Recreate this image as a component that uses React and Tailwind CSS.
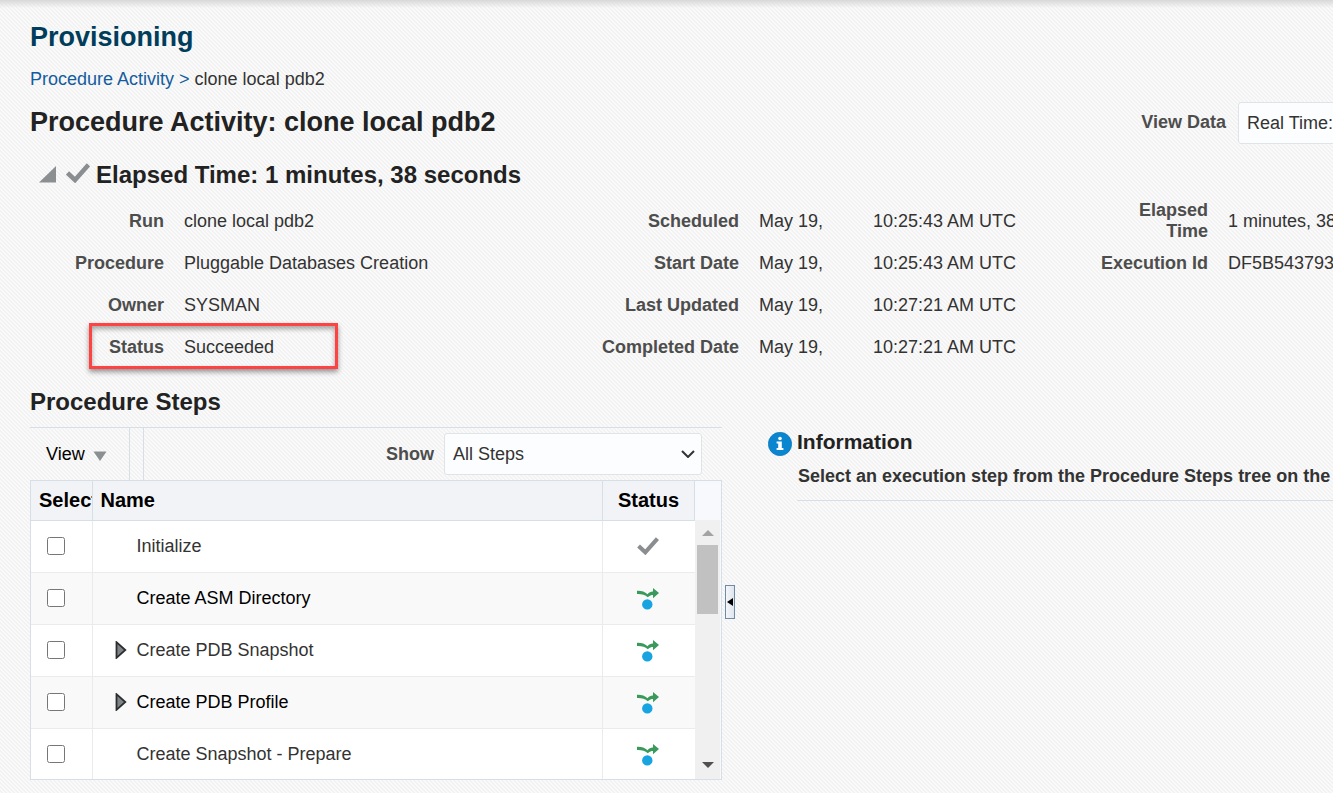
import React from "react";

const stripes =
  "bg-[#f6f6f6] bg-[linear-gradient(45deg,#f2f2f2_25%,#fafafa_25%,#fafafa_50%,#f2f2f2_50%,#f2f2f2_75%,#fafafa_75%)] bg-[size:4px_4px]";

function CheckMark({ className }) {
  return (
    <svg viewBox="0 0 24 20" className={className} aria-hidden="true">
      <path d="M1.5 10 L9 17 L22.5 1.8" fill="none" stroke="#8b8e91" strokeWidth="4.6" />
    </svg>
  );
}

function SkippedIcon() {
  return (
    <svg viewBox="0 -2 22 24" className="mx-auto h-6 w-[22px]" aria-label="Skipped" role="img">
      <path
        d="M0 2.8 C4 2.6 8 3.6 10.5 6.2 C12 4 14 3.3 16 3.4 V0 L22 5 L16 10.2 V7 C14.5 7 12.5 7.6 10.8 9.2 C8 6.8 4.5 5.8 0 6 Z"
        fill="#3a9a5b"
      />
      <circle cx="10.3" cy="16.4" r="5.2" fill="#18a4e0" />
    </svg>
  );
}

function Expander() {
  return (
    <svg viewBox="0 0 12 18" className="h-[18px] w-3" aria-hidden="true">
      <path d="M1.5 1.2 V16.8 L10.3 9 Z" fill="#808487" stroke="#2b2d2f" strokeWidth="1.8" />
    </svg>
  );
}

function Label({ children, className = "" }) {
  return <dt className={`text-right font-bold text-[#4d4d4d] ${className}`}>{children}</dt>;
}

const general = [
  ["Run", "clone local pdb2"],
  ["Procedure", "Pluggable Databases Creation"],
  ["Owner", "SYSMAN"],
  ["Status", "Succeeded"],
];

const dates = [
  ["Scheduled", "May 19,", "10:25:43 AM UTC"],
  ["Start Date", "May 19,", "10:25:43 AM UTC"],
  ["Last Updated", "May 19,", "10:27:21 AM UTC"],
  ["Completed Date", "May 19,", "10:27:21 AM UTC"],
];

const execution = [
  ["Elapsed Time", "1 minutes, 38"],
  ["Execution Id", "DF5B543793"],
];

const steps = [
  { name: "Initialize", done: true },
  { name: "Create ASM Directory" },
  { name: "Create PDB Snapshot", children: true },
  { name: "Create PDB Profile", children: true },
  { name: "Create Snapshot - Prepare" },
];

function Summary() {
  return (
    <section className="grid grid-cols-[minmax(0,570fr)_minmax(0,500fr)_minmax(0,233fr)] whitespace-nowrap">
      <dl>
        {general.map(([label, value]) => (
          <div key={label} className="relative flex h-[42px] items-center gap-5">
            <Label className="w-[134px]">{label}</Label>
            <dd>{value}</dd>
            {label === "Status" && (
              <span className="pointer-events-none absolute -top-[3px] left-[59px] h-[46px] w-[249px] border-3 border-[#ff4343] shadow-[0_3px_5px_#00000066,inset_0_3px_5px_#00000055]" />
            )}
          </div>
        ))}
      </dl>
      <dl>
        {dates.map(([label, day, time]) => (
          <div key={label} className="flex h-[42px] items-center">
            <Label className="w-[139px]">{label}</Label>
            <dd className="ml-5 flex">
              <span className="w-[114px]">{day}</span>
              <span>{time}</span>
            </dd>
          </div>
        ))}
      </dl>
      <dl>
        {execution.map(([label, value]) => (
          <div key={label} className="flex h-[42px] items-center gap-5">
            <Label className={label === "Elapsed Time" ? "w-[108px] shrink-0 pl-8 whitespace-normal" : "w-[108px] shrink-0"}>
              {label}
            </Label>
            <dd>{value}</dd>
          </div>
        ))}
      </dl>
    </section>
  );
}

function StepsTable() {
  return (
    <div className="flex h-[300px] overflow-hidden border border-[#d6dfe6] bg-white">
      <table className="h-fit w-full min-w-0 flex-1 table-fixed border-collapse">
        <colgroup>
          <col className="w-[61px]" />
          <col />
          <col className="w-[92px]" />
        </colgroup>
        <thead>
          <tr className="h-[39px] bg-[#f2f3f7] text-xl leading-[21px] text-black">
            <th className="overflow-hidden border-r border-b border-[#d6dfe6] pl-2 text-left text-clip whitespace-nowrap">Select</th>
            <th className="border-r border-b border-[#d6dfe6] pl-2 text-left">Name</th>
            <th className="border-r border-b border-[#d6dfe6] text-center">Status</th>
          </tr>
        </thead>
        <tbody>
          {steps.map((step, i) => (
            <tr key={step.name} className={i % 2 ? "h-[52px] bg-[#f9f9f9] text-black" : "h-[52px] bg-white"}>
              <td className="border-r border-b border-[#ebebeb] pl-4">
                <input
                  type="checkbox"
                  aria-label={`Select ${step.name}`}
                  className="block h-[18px] w-[18px]"
                />
              </td>
              <td className="border-r border-b border-[#ebebeb]">
                <div className="flex items-center">
                  <span className="flex w-11 justify-end pr-[10px]">
                    {step.children && (
                      <button type="button" aria-label={`Expand ${step.name}`}>
                        <Expander />
                      </button>
                    )}
                  </span>
                  {step.name}
                </div>
              </td>
              <td className="border-b border-[#ebebeb] pr-[2px]">
                {step.done ? <CheckMark className="mx-auto h-[18px] w-[22px]" /> : <SkippedIcon />}
              </td>
            </tr>
          ))}
        </tbody>
      </table>
      <div className="flex w-[26px] shrink-0 flex-col bg-[#f8f9fd] pt-[39px]">
        <div className="flex w-[25px] flex-1 flex-col items-center bg-[#f0f0f0] pt-[10px] pb-[11px]">
          <svg viewBox="0 0 12 6" className="h-[6px] w-3" aria-hidden="true">
            <path d="M6 0 L12 6 H0 Z" fill="#a3a3a3" />
          </svg>
          <div className="mt-[9px] h-[69px] w-[21px] bg-[#c1c1c1]" />
          <svg viewBox="0 0 12 6" className="mt-auto h-[6px] w-3" aria-hidden="true">
            <path d="M0 0 H12 L6 6 Z" fill="#505050" />
          </svg>
        </div>
      </div>
    </div>
  );
}

export default function App() {
  return (
    <div
      className={`min-h-screen overflow-hidden font-['Liberation_Sans',Arial,sans-serif] text-lg leading-[21px] text-[#333] ${stripes}`}
    >
      <div className="h-2 bg-gradient-to-b from-[#d8d8d8] to-transparent" />
      <main className="pt-[13px] pl-[30px]">
        <h1 className="text-[27px] leading-8 font-bold text-[#003d5b]">Provisioning</h1>
        <nav className="mt-4 text-[#145c9e]">
          <a href="#activity">Procedure Activity</a> &gt; <span className="text-[#333]">clone local pdb2</span>
        </nav>

        <div className="mt-3 flex items-center justify-between">
          <h2 className="pb-[2px] text-[27px] leading-8 font-bold whitespace-nowrap text-[#222]">
            Procedure Activity: clone local pdb2
          </h2>
          <div className="-mr-[5px] flex items-center gap-3">
            <label htmlFor="view-data" className="pb-[2px] font-bold text-[#4d4d4d]">
              View Data
            </label>
            <select
              id="view-data"
              className="h-[42px] w-[100px] appearance-none rounded-[3px] border border-[#dfe4e7] bg-[#fcfdfe] pl-2"
            >
              <option>Real Time:</option>
            </select>
          </div>
        </div>

        <div className="mt-4 mb-[10px] flex h-[30px] items-center pl-[9px]">
          <button type="button" aria-label="Collapse summary">
            <svg viewBox="0 0 18 18" className="h-[18px] w-[18px]" aria-hidden="true">
              <path d="M0 16.5 L17 0 V16.5 Z" fill="#8b8f92" />
            </svg>
          </button>
          <CheckMark className="mb-1 ml-[9px] h-5 w-6" />
          <h3 className="ml-[6px] text-2xl leading-[30px] font-bold text-[#222]">Elapsed Time: 1 minutes, 38 seconds</h3>
        </div>

        <Summary />

        <div className="mt-[19px] grid grid-cols-[minmax(0,692fr)_minmax(0,611fr)]">
          <section>
            <h3 className="h-[41px] border-b border-[#d6dfe6] text-2xl leading-[30px] font-bold text-[#222]">Procedure Steps</h3>
            <div className="flex h-[52px] items-center">
              <button type="button" className="flex h-full w-[100px] items-center gap-2 border-r border-[#d6dfe6] pl-4 text-black">
                View
                <svg viewBox="0 0 14 10" className="mt-1 h-[10px] w-[14px]" aria-hidden="true">
                  <path d="M0.5 0.5 H13.5 L7 10 Z" fill="#8b8f92" />
                </svg>
              </button>
              <div className="h-full w-[14px] border-r border-[#d6dfe6]" />
              <div className="mr-5 ml-auto flex items-center gap-[10px]">
                <label htmlFor="show-steps" className="font-bold text-[#4d4d4d]">
                  Show
                </label>
                <div className="relative">
                  <select
                    id="show-steps"
                    className="block h-[42px] w-[258px] appearance-none rounded-[3px] border border-[#dfe4e7] bg-[#fcfdfe] pl-2"
                  >
                    <option>All Steps</option>
                  </select>
                  <svg viewBox="0 0 14 8" className="pointer-events-none absolute top-[17px] right-[7px] h-2 w-[14px]" aria-hidden="true">
                    <path d="M1 1 L7 7 L13 1" fill="none" stroke="#333" strokeWidth="2" />
                  </svg>
                </div>
              </div>
            </div>
            <StepsTable />
          </section>

          <div className="flex min-w-0 pl-[3px]">
            <button
              type="button"
              aria-label="Resize panels"
              className="mt-[198px] flex h-[34px] w-[10px] shrink-0 items-center justify-center border border-[#6f8ba6] bg-gradient-to-r from-[#f4f7fa] to-[#dfe6ee]"
            >
              <svg viewBox="0 0 6 8" className="h-2 w-[6px]" aria-hidden="true">
                <path d="M6 0 V8 L0 4 Z" fill="#000" />
              </svg>
            </button>
            <section className="mt-[43px] ml-[33px] flex min-w-0 flex-1 gap-[5px] whitespace-nowrap">
              <svg viewBox="0 0 24 24" className="mt-[2px] h-6 w-6 shrink-0" aria-hidden="true">
                <circle cx="12" cy="12" r="11.7" fill="#0a86d0" stroke="#0870b2" strokeWidth="0.6" />
                <circle cx="12" cy="6.5" r="1.8" fill="#fff" />
                <path d="M8.6 9.5 H13.8 V16 H15.4 V18 H8.6 V16 H10.2 V11.4 H8.6 Z" fill="#fff" />
              </svg>
              <div className="flex-1">
                <h3 className="text-[21px] leading-6 font-bold text-[#222]">Information</h3>
                <p className="mt-[11px] border-b border-[#d6dfe6] pb-[13px] pl-[1px] leading-[22px] font-bold">
                  Select an execution step from the Procedure Steps tree on the
                </p>
              </div>
            </section>
          </div>
        </div>
      </main>
    </div>
  );
}
